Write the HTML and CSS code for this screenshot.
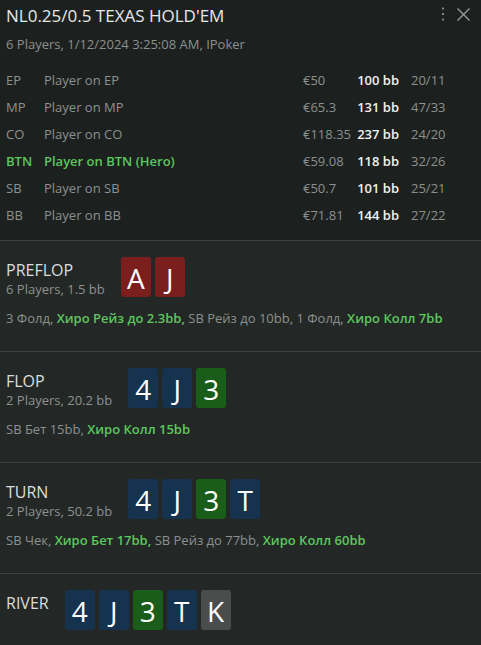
FILE: index.html
```html
<!DOCTYPE html>
<html>
<head>
<meta charset="utf-8">
<link rel="stylesheet" href="styles.css">
</head>
<body>
<div class="panel">
  <header class="head">
    <div class="title-row">
      <h1 class="title">NL0.25/0.5 TEXAS HOLD'EM</h1>
      <div class="tools">
        <svg class="ico" width="8" height="16" viewBox="0 0 8 16"><rect x="3" y="1.5" width="2" height="2" fill="#7f8482"/><rect x="3" y="7" width="2" height="2" fill="#7f8482"/><rect x="3" y="12.5" width="2" height="2" fill="#7f8482"/></svg>
        <svg class="ico" width="15" height="15" viewBox="0 0 15 15"><path d="M1.5 1.5 L13.5 13.5 M13.5 1.5 L1.5 13.5" stroke="#9a9e9c" stroke-width="1.3" fill="none"/></svg>
      </div>
    </div>
    <div class="meta">6 Players, 1/12/2024 3:25:08 AM, IPoker</div>
    <div class="players">
      <div class="row"><span class="pos">EP</span><span class="name">Player on EP</span><span class="cash">€50</span><span class="bb">100 bb</span><span class="stat">20/11</span></div>
      <div class="row"><span class="pos">MP</span><span class="name">Player on MP</span><span class="cash">€65.3</span><span class="bb">131 bb</span><span class="stat">47/33</span></div>
      <div class="row"><span class="pos">CO</span><span class="name">Player on CO</span><span class="cash">€118.35</span><span class="bb">237 bb</span><span class="stat">24/20</span></div>
      <div class="row hero"><span class="pos">BTN</span><span class="name">Player on BTN (Hero)</span><span class="cash">€59.08</span><span class="bb">118 bb</span><span class="stat">32/26</span></div>
      <div class="row"><span class="pos">SB</span><span class="name">Player on SB</span><span class="cash">€50.7</span><span class="bb">101 bb</span><span class="stat">25/21</span></div>
      <div class="row"><span class="pos">BB</span><span class="name">Player on BB</span><span class="cash">€71.81</span><span class="bb">144 bb</span><span class="stat">27/22</span></div>
    </div>
  </header>

  <section class="street">
    <div class="street-top">
      <div class="label">
        <div class="sname">PREFLOP</div>
        <div class="sinfo">6 Players, 1.5 bb</div>
      </div>
      <div class="cards">
        <span class="card red">A</span><span class="card red">J</span>
      </div>
    </div>
    <div class="actions">3 Фолд, <b>Хиро Рейз до 2.3bb,</b> SB Рейз до 10bb, 1 Фолд, <b>Хиро Колл 7bb</b></div>
  </section>

  <section class="street">
    <div class="street-top">
      <div class="label">
        <div class="sname">FLOP</div>
        <div class="sinfo">2 Players, 20.2 bb</div>
      </div>
      <div class="cards">
        <span class="card blue">4</span><span class="card blue">J</span><span class="card green">3</span>
      </div>
    </div>
    <div class="actions">SB Бет 15bb, <b>Хиро Колл 15bb</b></div>
  </section>

  <section class="street">
    <div class="street-top">
      <div class="label">
        <div class="sname">TURN</div>
        <div class="sinfo">2 Players, 50.2 bb</div>
      </div>
      <div class="cards">
        <span class="card blue">4</span><span class="card blue">J</span><span class="card green">3</span><span class="card blue">T</span>
      </div>
    </div>
    <div class="actions">SB Чек, <b>Хиро Бет 17bb,</b> SB Рейз до 77bb, <b>Хиро Колл 60bb</b></div>
  </section>

  <section class="street last">
    <div class="street-top">
      <div class="label">
        <div class="sname">RIVER</div>
      </div>
      <div class="cards">
        <span class="card blue">4</span><span class="card blue">J</span><span class="card green">3</span><span class="card blue">T</span><span class="card gray">K</span>
      </div>
    </div>
  </section>
</div>
</body>
</html>
```

FILE: styles.css
```css
html, body {
  margin: 0;
  padding: 0;
  background: #232826;
}
body {
  font-family: "Open Sans", "Noto Sans", sans-serif;
  color: #8c908e;
  width: 481px;
  height: 645px;
  overflow: hidden;
}
.panel {
  display: flex;
  flex-direction: column;
}
.head {
  background: #1c211f;
  padding: 4px 6px 0 6px;
  height: 236px;
  border-bottom: 1px solid #3d4240;
}
.title-row {
  display: flex;
  justify-content: space-between;
  align-items: flex-start;
}
.title {
  margin: 0;
  font-weight: 400;
  font-size: 17px;
  line-height: 24px;
  color: #e6e8e7;
}
.tools {
  display: flex;
  gap: 9px;
  align-items: center;
  padding-top: 2px;
  padding-right: 4px;
}
.ico { display: block; }
.meta {
  font-size: 13px;
  line-height: 18px;
  margin-top: 7px;
}
.players {
  margin-top: 14px;
  display: flex;
  flex-direction: column;
}
.row {
  display: grid;
  grid-template-columns: 38px 259px 54px 42px auto;
  font-size: 13px;
  line-height: 27px;
  height: 27px;
}
.row .bb {
  color: #f0f1f0;
  font-weight: 600;
  text-align: right;
}
.row .stat {
  padding-left: 12px;
}
.row.hero .pos, .row.hero .name {
  color: #5ec65e;
  font-weight: 600;
}
.street {
  border-bottom: 1px solid #3d4240;
  padding: 16px 6px 0 6px;
  box-sizing: border-box;
  height: 111px;
}
.street.last {
  border-bottom: none;
  height: auto;
}
.street-top {
  display: flex;
  align-items: flex-start;
  gap: 16px;
}
.label {
  padding-top: 2px;
}
.sname {
  font-size: 16px;
  line-height: 22px;
  color: #dcdedd;
}
.sinfo {
  font-size: 13px;
  line-height: 16px;
}
.cards {
  display: flex;
  gap: 4px;
}
.card {
  width: 30px;
  height: 40px;
  border-radius: 3px;
  color: #ffffff;
  font-size: 28px;
  line-height: 42px;
  text-align: center;
}
.card.red { background: #7a1e1e; }
.card.blue { background: #15334e; }
.card.green { background: #1a5c1a; }
.card.gray { background: #4b4c4c; }
.actions {
  font-size: 13px;
  line-height: 18px;
  margin-top: 12px;
}
.actions b {
  color: #5ec65e;
  font-weight: 600;
}
```
